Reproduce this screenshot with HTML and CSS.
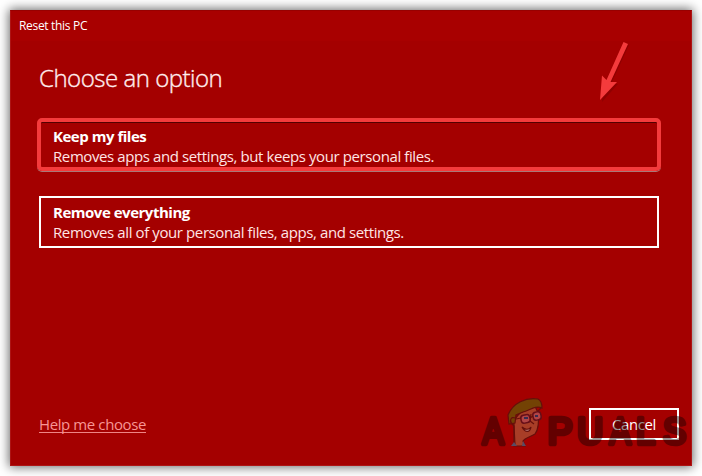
FILE: index.html
```html
<!DOCTYPE html>
<html lang="en">
<head>
<meta charset="utf-8">
<title>Reset this PC</title>
<link rel="stylesheet" href="styles.css">
</head>
<body>
<main class="window">
  <header class="titlebar"><span>Reset this PC</span></header>
  <section class="content">
    <h1>Choose an option</h1>
    <div class="options">
      <div class="option selected">
        <strong>Keep my files</strong>
        <span>Removes apps and settings, but keeps your personal files.</span>
      </div>
      <div class="option">
        <strong>Remove everything</strong>
        <span>Removes all of your personal files, apps, and settings.</span>
      </div>
    </div>
  </section>
  <footer class="footer">
    <a class="help">Help me choose</a>
    <div class="cancel"><span>Cancel</span></div>
  </footer>
  <svg class="arrow" viewBox="0 0 32 62" width="32" height="62">
    <path class="arrow-shade" d="M27 2L31 4L13 43L20 43L4 61L6 37L10 41Z"/>
    <path class="arrow-shape" d="M25.500 1L30 3L12.500 41L19 41L2 59L4 34.500L8.500 39Z"/>
  </svg>
  <svg class="watermark" viewBox="476 392 214 60" width="214" height="60">
    <g class="letters">
      <text x="482.500" y="443.500" textLength="21" lengthAdjust="spacingAndGlyphs">A</text>
      <text x="547.500" y="443.500" textLength="25" lengthAdjust="spacingAndGlyphs">P</text>
      <text x="577" y="443.500" textLength="26" lengthAdjust="spacingAndGlyphs">U</text>
      <text x="609.500" y="443.500" textLength="21" lengthAdjust="spacingAndGlyphs">A</text>
      <text x="636" y="443.500" textLength="19" lengthAdjust="spacingAndGlyphs">L</text>
      <text x="663" y="443.500" textLength="23" lengthAdjust="spacingAndGlyphs">S</text>
    </g>
    <g class="mascot">
      <path fill="#a9432a" d="M514 423C514 419 517 416 520 413L535 406L538 413C539 421 538 430 535 434C530 437 525 438 523 441L525 446H514Z"/>
      <path fill="#704805" d="M508 415C513 403 526 397 538 399C542 401 542 405 542 408C536 405 530 410 523 412L516 415L515 423L509 424Z"/>
      <path fill="none" d="M515 418C511 416 509 421 512 424L514 426L515 445M541 408L538 411L539 415M531 414L530 421L534 424"/>
      <rect class="lens" x="521" y="415" width="9" height="8" rx="3" transform="rotate(-12 525 419)"/>
      <rect class="lens" x="533" y="412" width="8" height="8" rx="3" transform="rotate(-12 537 416)"/>
      <path fill="none" d="M516 419L521 418M530 418L533 416"/>
      <path fill="#303057" stroke="none" d="M524 417h4v2h-4zM535 415h3v2h-3z"/>
      <path fill="#ad7371" d="M522 427C525 430 529 430 531 427C530 433 525 433 522 427Z"/>
      <path fill="#54516c" stroke="none" d="M511 446L514 442L517 446ZM522 446L523 441L526 446Z"/>
    </g>
  </svg>
</main>
</body>
</html>
```

FILE: styles.css
```css
* { box-sizing: border-box; }
body {
  margin: 0;
  padding: 10px;
  width: 702px;
  height: 476px;
  overflow: hidden;
  background: #fff;
  color: #fff;
  font-family: "Open Sans", "Noto Sans", sans-serif;
}
.window {
  position: relative;
  display: flex;
  flex-direction: column;
  width: 682px;
  height: 456px;
  background: #a40000;
  border: 1px solid #ad1515;
  border-top-color: #970000;
  box-shadow: 0 0 10px 1px rgba(0, 0, 0, .6);
}
.titlebar {
  height: 30px;
  padding-left: 8px;
  background: #a80000;
  font-size: 12px;
  line-height: 30px;
}
.titlebar span { letter-spacing: -.32px; }
.content { padding: 20px 32px 0 28px; }
h1 {
  margin: 0;
  height: 57px;
  color: #ffeded;
  font-size: 24px;
  font-weight: 300;
  line-height: 33px;
  letter-spacing: -.48px;
  -webkit-text-stroke: .35px #ffeded;
}
.options { display: grid; gap: 24px; }
.option {
  display: flex;
  flex-direction: column;
  width: 620px;
  height: 52px;
  padding: 4px 12px 0;
  border: 2px solid #fff;
  font-size: 15px;
  line-height: 20px;
  white-space: nowrap;
}
.option span { color: #ffe5e5; letter-spacing: -.4px; }
.option strong { letter-spacing: -.48px; }
.option.selected {
  width: 624px;
  height: 53px;
  margin: 0 -2px;
  border: 4px solid #f43b3c;
  border-radius: 5px;
  box-shadow: inset 0 1px #530000, 0 1px #aa7777;
}
.options .option + .option { margin-top: 1px; }
.footer {
  display: flex;
  justify-content: space-between;
  margin: auto 12px 25px 28px;
  font-size: 15px;
}
.help {
  align-self: flex-start;
  height: 17px;
  margin-top: 8px;
  border-bottom: 1px solid #ee8585;
  color: #f79595;
  line-height: 17px;
  letter-spacing: -.4px;
}
.cancel {
  width: 90px;
  height: 32px;
  border: 2px solid #fff;
  text-align: center;
  line-height: 29px;
  letter-spacing: -.4px;
}
.arrow { position: absolute; left: 587px; top: 30px; }
.arrow-shade { fill: #840000; opacity: .6; }
.arrow-shape { fill: #f43b3c; }
.watermark { position: absolute; left: 465px; top: 381px; }
.letters {
  fill: #100000;
  stroke: #100000;
  stroke-width: 4.6;
  stroke-linejoin: round;
  stroke-linecap: round;
  font: 400 37px "Liberation Sans", sans-serif;
  opacity: .43;
}
.mascot { stroke: #61110b; stroke-width: 1.2; opacity: .93; }
.lens { fill: #b34b4c; stroke: #61101a; stroke-width: 1.5; }
```
